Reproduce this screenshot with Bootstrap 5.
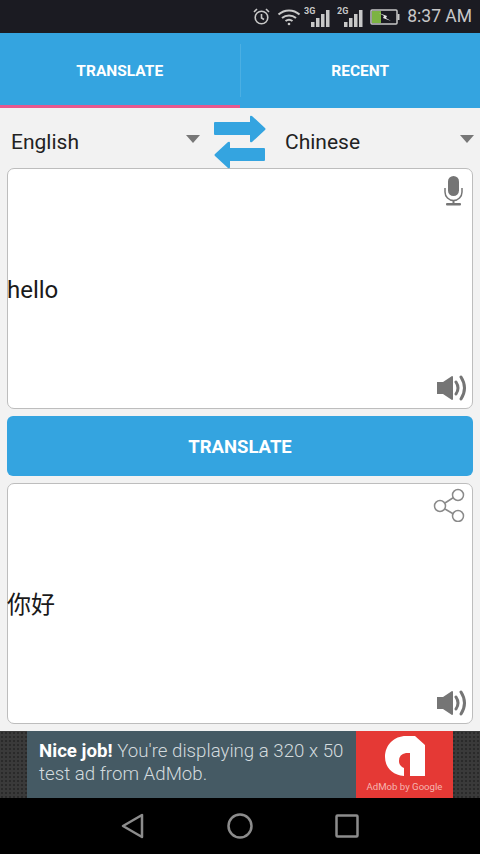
<!DOCTYPE html>
<html lang="en">
<head>
  <meta charset="UTF-8" />
  <title>Translate</title>
  <meta name="viewport" content="width=device-width, initial-scale=1" />
  <link href="https://cdn.jsdelivr.net/npm/bootstrap@5.3.3/dist/css/bootstrap.min.css" rel="stylesheet" />
  <style>
    html, body { height:100%; }
    body { background:#f2f2f2; font-family:Roboto, "Noto Sans CJK SC", sans-serif; width:480px; height:854px; overflow:hidden; }
    .status-bar { height:33px; background:#1b1b22; color:#c8c8c8; font-size:17.5px; padding-right:8px; gap:6px; }
    .status-wifi { margin-right:-3px; }
    .status-time { margin-left:1px; }
    .tab-bar { height:75px; background:#34a4e0; }
    .tab-item { width:240px; height:75px; color:#fff; font-size:15.5px; font-weight:700; padding-top:2px; }
    .tab-item.active-tab { border-bottom:3px solid #e8588e; padding-top:5px; }
    .tab-sep { width:1px; height:53px; background:#4bafe3; }
    .lang-row { height:60px; }
    .lang-pick { width:207px; font-size:21px; color:#222; padding:0 7px 0 11px; }
    .lang-pick.lang-right { width:204px; padding-left:9px; padding-right:6px; }
    .lang-name { padding-top:10px; }
    .lang-caret { width:0; height:0; border-left:7px solid transparent; border-right:7px solid transparent; border-top:8px solid #777; margin-top:2px; }
    .swap-box { width:69px; padding:7px 4px 0 0; }
    .text-box { height:241px; margin:0 7px; background:#fff; border:1px solid #bdbdbd; border-radius:7px; font-size:24px; color:#1a1a1a; }
    .box-top { height:38px; }
    .box-bottom { height:40px; }
    .box-text { margin-left:-1px; padding-top:5px; }
    .box-text-cn { margin-left:-1px; padding-top:5px; }
    .go-btn { height:60px; width:466px; margin:7px; padding:4px 0 0; background:#34a4e0; border:0; border-radius:6px; color:#fff; font-size:18.5px; font-weight:700; }
    .go-btn:hover { background:#34a4e0; color:#fff; }
    .ad-strip { height:67px; margin-top:7px; background:#3a3a3a; background-image:radial-gradient(#2a2a2a 1px, transparent 1px); background-size:4px 4px; }
    .ad-body { width:426px; height:67px; background:#455a64; }
    .ad-text { width:329px; padding:9px 0 0 12px; color:#d3dbde; font-size:18.7px; font-weight:300; line-height:23px; white-space:nowrap; }
    .ad-text b { color:#fff; font-weight:700; }
    .ad-logo { width:97px; height:67px; background:#e53935; color:#f5b5b0; font-size:9.6px; padding-top:5px; }
    .nav-strip { height:56px; background:#000; }
    .nav-spot { width:107px; }
  </style>
</head>
<body>

  <div class="status-bar d-flex align-items-center justify-content-end">
    <svg width="19" height="19" viewBox="0 0 19 19" fill="none" stroke="#c8c8c8" stroke-width="1.6">
      <circle cx="9.5" cy="10.5" r="6.3"/><path d="M9.5 7v4l2.5 1.5M2 5l3-3M17 5l-3-3"/>
    </svg>
    <svg class="status-wifi" width="24" height="19" viewBox="0 0 24 19" fill="none" stroke="#c8c8c8" stroke-width="2">
      <path d="M1.5 7.5c6-5.500 15-5.500 21 0M5 11c4-3.500 10-3.500 14 0M8.500 14c2-1.500 5-1.500 7 0"/><circle cx="12" cy="17" r="1.300" fill="#c8c8c8" stroke="none"/>
    </svg>
    <svg width="27" height="22" viewBox="0 0 27 22" fill="#c8c8c8">
      <text x="0" y="8" font-size="9" font-weight="700" font-family="Roboto">3G</text>
      <rect x="7" y="16" width="3.500" height="5"/><rect x="12" y="12" width="3.500" height="9"/><rect x="17" y="8" width="3.500" height="13"/><rect x="22" y="4" width="3.500" height="17"/>
    </svg>
    <svg width="27" height="22" viewBox="0 0 27 22" fill="#c8c8c8">
      <text x="0" y="8" font-size="9" font-weight="700" font-family="Roboto">2G</text>
      <rect x="7" y="16" width="3.500" height="5"/><rect x="12" y="12" width="3.500" height="9"/><rect x="17" y="8" width="3.500" height="13"/><rect x="22" y="4" width="3.500" height="17"/>
    </svg>
    <svg width="30" height="16" viewBox="0 0 30 16">
      <rect x="1" y="1" width="26" height="14" rx="1" fill="none" stroke="#c8c8c8" stroke-width="1.500"/>
      <rect x="2" y="2" width="9" height="12" fill="#7cb342"/><rect x="27.500" y="5" width="2" height="6" fill="#c8c8c8"/>
      <path d="M9 4l8 3-1 2 5 3-8-3 1-2z" fill="#e6e6e6"/>
    </svg>
    <span class="status-time">8:37 AM</span>
  </div>

  <div class="tab-bar d-flex align-items-center">
    <div class="tab-item active-tab d-flex align-items-center justify-content-center">TRANSLATE</div>
    <div class="tab-sep flex-shrink-0"></div>
    <div class="tab-item flex-grow-1 d-flex align-items-center justify-content-center">RECENT</div>
  </div>

  <div class="lang-row d-flex align-items-center">
    <div class="lang-pick d-flex align-items-center justify-content-between"><span class="lang-name">English</span><span class="lang-caret"></span></div>
    <div class="swap-box d-flex justify-content-center">
      <svg width="53" height="54" viewBox="0 0 53 54" fill="#34a4e0">
        <path d="M2 7h35V2q0-2 2-1l13 12q1 1 0 2L39 27q-2 1-2-1v-6H2q-1 0-1-1V8q0-1 1-1z"/>
        <path d="M51 33H17v-5q0-2-2-1L2 39q-1 1 0 2l13 12q2 1 2-1v-6h34q1 0 1-1V34q0-1-1-1z"/>
      </svg>
    </div>
    <div class="lang-pick lang-right d-flex align-items-center justify-content-between"><span class="lang-name">Chinese</span><span class="lang-caret"></span></div>
  </div>

  <div class="text-box d-flex flex-column">
    <div class="box-top d-flex justify-content-end align-items-start">
      <svg class="me-2 mt-1" width="22" height="34" viewBox="0 0 22 34" fill="#757575">
        <rect x="6" y="3" width="11" height="20" rx="5.500"/>
        <path d="M3 15v4a8.500 8.500 0 0 0 17 0v-4" fill="none" stroke="#757575" stroke-width="1.500"/>
        <rect x="10.500" y="27" width="2" height="4"/><rect x="4" y="30" width="15" height="2.500" rx="1"/>
      </svg>
    </div>
    <div class="flex-grow-1 d-flex align-items-center"><span class="box-text">hello</span></div>
    <div class="box-bottom d-flex justify-content-end align-items-center">
      <svg class="me-1" width="32" height="28" viewBox="0 0 32 28" fill="#757575">
        <path d="M1 8h6l9-6q1 0 1 1v22q0 1-1 1l-9-6H1z"/>
        <path d="M20 8q4 6 0 12M25 3q7 11 0 22" fill="none" stroke="#757575" stroke-width="3" stroke-linecap="round"/>
      </svg>
    </div>
  </div>

  <button class="btn go-btn d-block">TRANSLATE</button>

  <div class="text-box d-flex flex-column">
    <div class="box-top d-flex justify-content-end align-items-start">
      <svg class="me-1 mt-1" width="35" height="34" viewBox="0 0 35 34" fill="none" stroke="#8a8a8a" stroke-width="1.500">
        <circle cx="25" cy="7" r="5.500"/><circle cx="7" cy="18" r="5.500"/><circle cx="25" cy="28" r="5.500"/>
        <path d="M12 15l8.500-5.500M12 21l8.500 5"/>
      </svg>
    </div>
    <div class="flex-grow-1 d-flex align-items-center"><span class="box-text-cn">你好</span></div>
    <div class="box-bottom d-flex justify-content-end align-items-center">
      <svg class="me-1" width="32" height="28" viewBox="0 0 32 28" fill="#757575">
        <path d="M1 8h6l9-6q1 0 1 1v22q0 1-1 1l-9-6H1z"/>
        <path d="M20 8q4 6 0 12M25 3q7 11 0 22" fill="none" stroke="#757575" stroke-width="3" stroke-linecap="round"/>
      </svg>
    </div>
  </div>

  <div class="ad-strip d-flex justify-content-center">
    <div class="ad-body d-flex">
      <div class="ad-text"><b>Nice job!</b> You're displaying a 320 x 50<br>test ad from AdMob.</div>
      <div class="ad-logo d-flex flex-column align-items-center">
        <svg width="42" height="41" viewBox="0 0 42 41">
          <path d="M22 0h9l10 9v31H26V17h-4q-7 1-7 8 0 5 5 7v8C8 39 1 31 1 21 1 9 10 0 22 0z" fill="#fff"/>
        </svg>
        <span class="mt-auto mb-1 text-nowrap">AdMob by Google</span>
      </div>
    </div>
  </div>

  <div class="nav-strip d-flex justify-content-center align-items-center">
    <div class="nav-spot d-flex justify-content-center">
      <svg width="26" height="28" viewBox="0 0 26 28" fill="none" stroke="#8c8c8c" stroke-width="2.500" stroke-linejoin="round"><path d="M22 3v22L3 14z"/></svg>
    </div>
    <div class="nav-spot d-flex justify-content-center">
      <svg width="26" height="26" viewBox="0 0 26 26" fill="none" stroke="#8c8c8c" stroke-width="2.500"><circle cx="13" cy="13" r="11.500"/></svg>
    </div>
    <div class="nav-spot d-flex justify-content-center">
      <svg width="24" height="24" viewBox="0 0 24 24" fill="none" stroke="#8c8c8c" stroke-width="2.500" stroke-linejoin="round"><rect x="1.500" y="1.500" width="21" height="21" rx="1"/></svg>
    </div>
  </div>

</body>
</html>
